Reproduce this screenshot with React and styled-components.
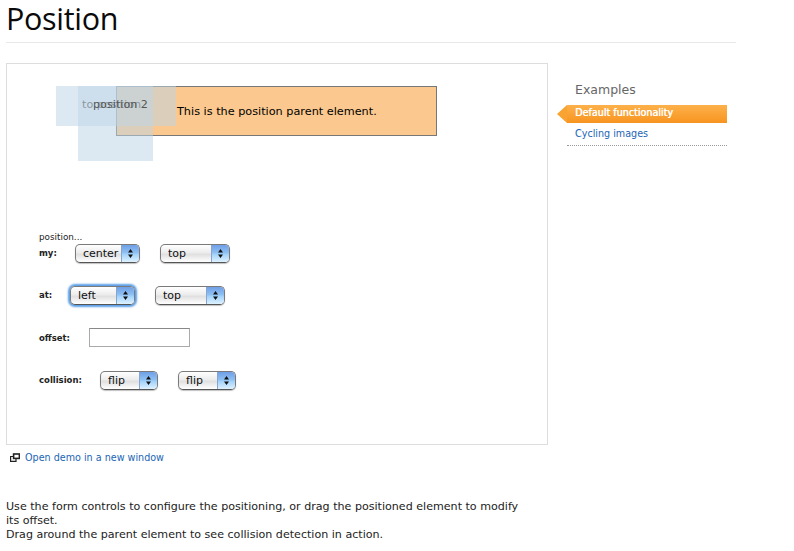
import React from "react";
import styled, { createGlobalStyle } from "styled-components";

const Global = createGlobalStyle`
  html, body { margin: 0; padding: 0; background: #fff; }
  body { font-family: "DejaVu Sans", Verdana, sans-serif; color: #111; overflow: hidden; }
`;
const Page = styled.div`
  width: 794px; height: 551px; overflow: hidden; padding: 0 0 0 6px; box-sizing: border-box;
`;
const Title = styled.h1`
  margin: 0; width: 730px; height: 43px; box-sizing: border-box; border-bottom: 1px solid #e8e8e8;
  font: 400 30.5px/37px "Open Sans", "DejaVu Sans", sans-serif; color: #0a0a0a; letter-spacing: -0.3px;
`;
const Columns = styled.div`
  display: flex; align-items: flex-start; margin-top: 20px;
`;
const Main = styled.div`width: 542px;`;
const Frame = styled.div`
  position: relative; width: 542px; height: 382px; box-sizing: border-box; border: 1px solid #ddd;
  padding: 168px 0 0 32px;
`;
const Parent = styled.div`
  position: absolute; left: 109px; top: 22px; width: 321px; height: 50px; box-sizing: border-box;
  border: 1px solid #777; background: #fbc98f; padding-left: 60px;
  font-size: 11.25px; line-height: 49px; color: #000; white-space: nowrap;
`;
const Floater = styled.div`
  position: absolute; left: ${p => p.$x}px; top: ${p => p.$y}px; width: ${p => p.$w}px; height: ${p => p.$h}px;
  box-sizing: border-box; padding-left: ${p => p.$pad}px;
  background: rgba(189, 213, 231, 0.52); color: #555; font-size: 11.2px; line-height: 37px;
  white-space: nowrap;
`;
const Intro = styled.div`font-size: 8.8px; line-height: 11px; height: 11px; color: #222;`;
const Row = styled.div`
  display: flex; align-items: center; height: 20px; margin-top: ${p => p.$mt}px;
`;
const Label = styled.label`
  font-size: 8.5px; width: ${p => p.$w}px; flex: none; color: #222; padding-top: ${p => p.$nudge || 0}px;
  font-family: "DejaVu Sans", sans-serif; font-weight: 700; white-space: nowrap;
`;
const SelectBox = styled.div`
  width: ${p => p.$w}px; height: 19px; margin-right: ${p => p.$mr || 0}px; flex: none; box-sizing: border-box;
  display: flex; border: 1px solid #7a7a7a; border-bottom-color: #555; border-radius: 5px; overflow: hidden;
  background: linear-gradient(#fff 0%, #ececec 45%, #e0e0e0 55%, #fff 100%);
  box-shadow: ${p => p.$focus ? "0 0 2px 2px #5a9ee6" : "0 1px 1px rgba(0,0,0,.25)"};
  font-size: 11px; line-height: 17px; color: #111;
`;
const SelectText = styled.span`flex: 1; padding-left: 7px;`;
const Stepper = styled.span`
  width: 17px; flex: none; display: flex; align-items: center; justify-content: center;
  background: linear-gradient(#6f9fe6 0%, #8fc0f2 45%, #a2d2fa 55%, #dff2ff 100%);
  border-left: 1px solid #86a5d0;
`;
const TextField = styled.input`
  width: 101px; height: 19px; box-sizing: border-box; border: 1px solid #aaa; border-top-color: #888;
  background: #fff; padding: 0; margin: 0; outline: none;
`;
const OpenLink = styled.div`
  display: flex; align-items: center; height: 14px; margin-top: 5px; padding-left: 4px; gap: 5px;
`;
const Anchor = styled.a`font-size: 9.6px; color: #1b65b5; text-decoration: none;`;
const Description = styled.p`
  margin: 36px 0 0; width: 520px; font-size: 11.1px; line-height: 14px; color: #222;
`;
const Side = styled.aside`
  width: 170px; margin-left: 9px; padding-top: 18px;
`;
const SideHead = styled.h2`
  margin: 0 0 6px 18px; font: 400 12.5px/18px "DejaVu Sans", sans-serif; color: #666;
`;
const List = styled.ul`
  list-style: none; margin: 0; padding: 0 0 1px 0; margin-left: 10px; border-bottom: 1px dotted #999; width: 160px;
`;
const Item = styled.li`
  position: relative; height: ${p => p.$active ? 18 : 21}px; padding-left: 8px; font-size: 9.6px; box-sizing: border-box;
  line-height: ${p => p.$active ? 15 : 22}px; color: ${p => p.$active ? "#fff" : "#1b65b5"};
  text-shadow: ${p => p.$active ? "0.4px 0 0 #fff" : "none"};
  background: ${p => p.$active ? "linear-gradient(#fdb14a, #f79420)" : "none"};
  white-space: nowrap;
  ${p => p.$active && `&::before {
    content: ""; position: absolute; left: -10px; top: 0; border-style: solid; border-width: 9px 10px 9px 0;
    border-color: transparent #f9a432 transparent transparent;
  }`}
`;

const Arrows = () => (
  <svg width="7" height="11" viewBox="0 0 7 11"><path d="M3.5 1 L6 4.5 H1Z M3.5 10 L6 6.5 H1Z" fill="#111" /></svg>
);
const Select = ({ w, mr, focus, children }) => (
  <SelectBox $w={w} $mr={mr} $focus={focus}><SelectText>{children}</SelectText><Stepper><Arrows /></Stepper></SelectBox>
);
const WindowIcon = () => (
  <svg width="10" height="9" viewBox="0 0 10 9" fill="none" stroke="#222" strokeWidth="1.2">
    <rect x="3.6" y="1" width="5.8" height="4.4" strokeWidth="1.6" />
    <path d="M3 3.5H0.6V8.4H6V6" />
  </svg>
);

export default function App() {
  return (
    <Page>
      <Global />
      <Title>Position</Title>
      <Columns>
        <Main>
          <Frame>
            <Parent>This is the position parent element.</Parent>
            <Floater $x={49} $y={22} $w={120} $h={40} $pad={26}>to position</Floater>
            <Floater $x={71} $y={22} $w={75} $h={75} $pad={15}>position 2</Floater>
            <Intro>position...</Intro>
            <Row $mt={0}>
              <Label $w={36}>my:</Label>
              <Select w={65} mr={20}>center</Select>
              <Select w={70}>top</Select>
            </Row>
            <Row $mt={22}>
              <Label $w={31}>at:</Label>
              <Select w={65} mr={20} focus>left</Select>
              <Select w={70}>top</Select>
            </Row>
            <Row $mt={22}>
              <Label $w={50} $nudge={2}>offset:</Label>
              <TextField />
            </Row>
            <Row $mt={23}>
              <Label $w={61}>collision:</Label>
              <Select w={58} mr={20}>flip</Select>
              <Select w={58}>flip</Select>
            </Row>
          </Frame>
          <OpenLink><WindowIcon /><Anchor>Open demo in a new window</Anchor></OpenLink>
          <Description>
            Use the form controls to configure the positioning, or drag the positioned element to modify its offset.<br />
            Drag around the parent element to see collision detection in action.
          </Description>
        </Main>
        <Side>
          <SideHead>Examples</SideHead>
          <List>
            <Item $active>Default functionality</Item>
            <Item>Cycling images</Item>
          </List>
        </Side>
      </Columns>
    </Page>
  );
}
